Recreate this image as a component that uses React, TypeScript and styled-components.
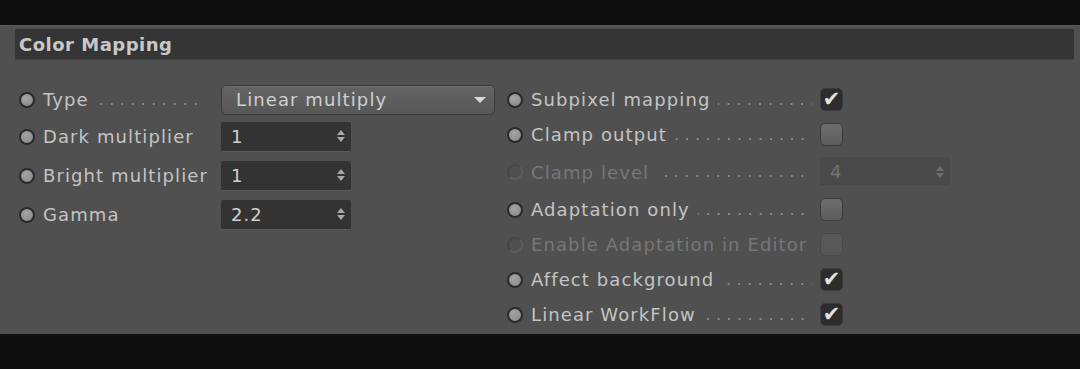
import styled, { createGlobalStyle } from 'styled-components';

const GlobalStyle = createGlobalStyle`
  html, body {
    margin: 0;
    padding: 0;
    background: #0e0e0e;
  }
  body {
    font-family: 'DejaVu Sans', 'Liberation Sans', sans-serif;
  }
`;

const Screen = styled.div`
  width: 1080px;
  height: 369px;
  background: #0e0e0e;
  padding-top: 25px;
  box-sizing: border-box;
`;

const Panel = styled.div`
  height: 309px;
  background: #505050;
  border-top: 1px solid #5a5a5a;
  box-sizing: border-box;
  padding: 3px 6px 0 15px;
`;

const Header = styled.div`
  height: 30px;
  background: #353535;
  border-bottom: 1px solid #444;
  display: flex;
  align-items: center;
  padding-left: 4px;
  font-weight: bold;
  font-size: 18px;
  color: #c8c8c8;
  letter-spacing: 0.5px;
`;

const Columns = styled.div`
  display: flex;
  margin-top: 22px;
  padding-left: 4px;
`;

const LeftCol = styled.div`
  width: 488px;
  display: grid;
  grid-template-columns: 202px 1fr;
  grid-template-rows: 35px 39px 39px 39px;
  align-items: center;
`;

const RightCol = styled.div`
  display: grid;
  grid-template-columns: 313px 130px;
  grid-template-rows: 35px 35px 40px 35px 35px 35px 35px;
  align-items: center;
`;

const Label = styled.div<{ $pad: number; $disabled?: boolean }>`
  display: flex;
  align-items: center;
  height: 100%;
  padding-right: ${(p) => p.$pad}px;
  font-size: 18px;
  letter-spacing: 1.1px;
  color: ${(p) => (p.$disabled ? '#777777' : '#c4c4c4')};
  white-space: nowrap;
`;

const Radio = styled.span<{ $disabled?: boolean }>`
  width: 16px;
  height: 16px;
  border-radius: 50%;
  flex: none;
  margin-right: 8px;
  box-sizing: border-box;
  ${(p) =>
    p.$disabled
      ? `border: 2px solid #5c5c5c; border-top-color: #464646; border-left-color: #464646; background: #505050;`
      : `border: 2px solid #2a2a2a; background: radial-gradient(circle at 40% 35%, #a4a4a4, #868686);`}
`;

const Dots = styled.span`
  flex: 1;
  align-self: center;
  height: 2px;
  margin: 8px 0 0 8px;
  background: linear-gradient(to right, #8a8a8a 2px, transparent 2px) repeat-x;
  background-size: 10.5px 2px;
  background-position: right center;
`;

const Dropdown = styled.div`
  width: 274px;
  height: 30px;
  box-sizing: border-box;
  border-radius: 5px;
  border: 1px solid #3a3a3a;
  background: linear-gradient(#646464, #575757);
  box-shadow: inset 0 1px 0 #707070;
  display: flex;
  align-items: center;
  justify-content: space-between;
  padding: 0 8px 0 14px;
  font-size: 18px;
  letter-spacing: 1.1px;
  color: #d0d0d0;
`;

const Caret = styled.span`
  width: 0;
  height: 0;
  border-left: 6px solid transparent;
  border-right: 6px solid transparent;
  border-top: 6px solid #d8d8d8;
`;

const Field = styled.div<{ $disabled?: boolean }>`
  width: 130px;
  height: 30px;
  box-sizing: border-box;
  border-radius: 2px;
  background: ${(p) => (p.$disabled ? '#4a4a4a' : '#333333')};
  border-bottom: 1px solid ${(p) => (p.$disabled ? '#555' : '#5a5a5a')};
  display: flex;
  align-items: center;
  justify-content: space-between;
  padding: 0 6px 0 10px;
  font-size: 18px;
  letter-spacing: 1px;
  color: ${(p) => (p.$disabled ? '#747474' : '#cfcfcf')};
`;

const Spinner = styled.span<{ $disabled?: boolean }>`
  display: flex;
  flex-direction: column;
  gap: 2px;
  &::before,
  &::after {
    content: '';
    width: 0;
    height: 0;
    border-left: 4px solid transparent;
    border-right: 4px solid transparent;
  }
  &::before {
    border-bottom: 5px solid ${(p) => (p.$disabled ? '#6e6e6e' : '#a8a8a8')};
  }
  &::after {
    border-top: 5px solid ${(p) => (p.$disabled ? '#6e6e6e' : '#a8a8a8')};
  }
`;

const Check = styled.div<{ $checked?: boolean; $disabled?: boolean }>`
  width: 23px;
  height: 23px;
  box-sizing: border-box;
  border-radius: 5px;
  display: flex;
  align-items: center;
  justify-content: center;
  font-size: 21px;
  line-height: 1;
  color: #e2e2e2;
  ${(p) =>
    p.$checked
      ? `background: #2c2c2c; border: 1px solid #3c3c3c;`
      : p.$disabled
      ? `background: #575757; border: 1px solid #484848;`
      : `background: linear-gradient(#6e6e6e, #5c5c5c); border: 1px solid #3a3a3a;`}
`;

type RightRow = {
  label: string;
  dots: boolean;
  disabled?: boolean;
  control: 'on' | 'off' | 'field';
  value?: string;
};

const rightRows: RightRow[] = [
  { label: 'Subpixel mapping', dots: true, control: 'on' },
  { label: 'Clamp output', dots: true, control: 'off' },
  { label: 'Clamp level', dots: true, control: 'field', disabled: true, value: '4' },
  { label: 'Adaptation only', dots: true, control: 'off' },
  { label: 'Enable Adaptation in Editor', dots: false, control: 'off', disabled: true },
  { label: 'Affect background', dots: true, control: 'on' },
  { label: 'Linear WorkFlow', dots: true, control: 'on' },
];

const numberRows = [
  { label: 'Dark multiplier', value: '1' },
  { label: 'Bright multiplier', value: '1' },
  { label: 'Gamma', value: '2.2' },
];

export default function App() {
  return (
    <>
      <GlobalStyle />
      <Screen>
        <Panel>
          <Header>Color Mapping</Header>
          <Columns>
            <LeftCol>
              <Label $pad={16}>
                <Radio />
                Type
                <Dots />
              </Label>
              <Dropdown>
                Linear multiply
                <Caret />
              </Dropdown>
              {numberRows.map((r) => (
                <>
                  <Label $pad={4} key={r.label}>
                    <Radio />
                    {r.label}
                  </Label>
                  <Field>
                    {r.value}
                    <Spinner />
                  </Field>
                </>
              ))}
            </LeftCol>
            <RightCol>
              {rightRows.map((r) => (
                <>
                  <Label $pad={8} $disabled={r.disabled} key={r.label}>
                    <Radio $disabled={r.disabled} />
                    {r.label}
                    {r.dots && <Dots />}
                  </Label>
                  {r.control === 'field' ? (
                    <Field $disabled>
                      {r.value}
                      <Spinner $disabled />
                    </Field>
                  ) : (
                    <Check $checked={r.control === 'on'} $disabled={r.disabled}>
                      {r.control === 'on' ? '✔' : ''}
                    </Check>
                  )}
                </>
              ))}
            </RightCol>
          </Columns>
        </Panel>
      </Screen>
    </>
  );
}
